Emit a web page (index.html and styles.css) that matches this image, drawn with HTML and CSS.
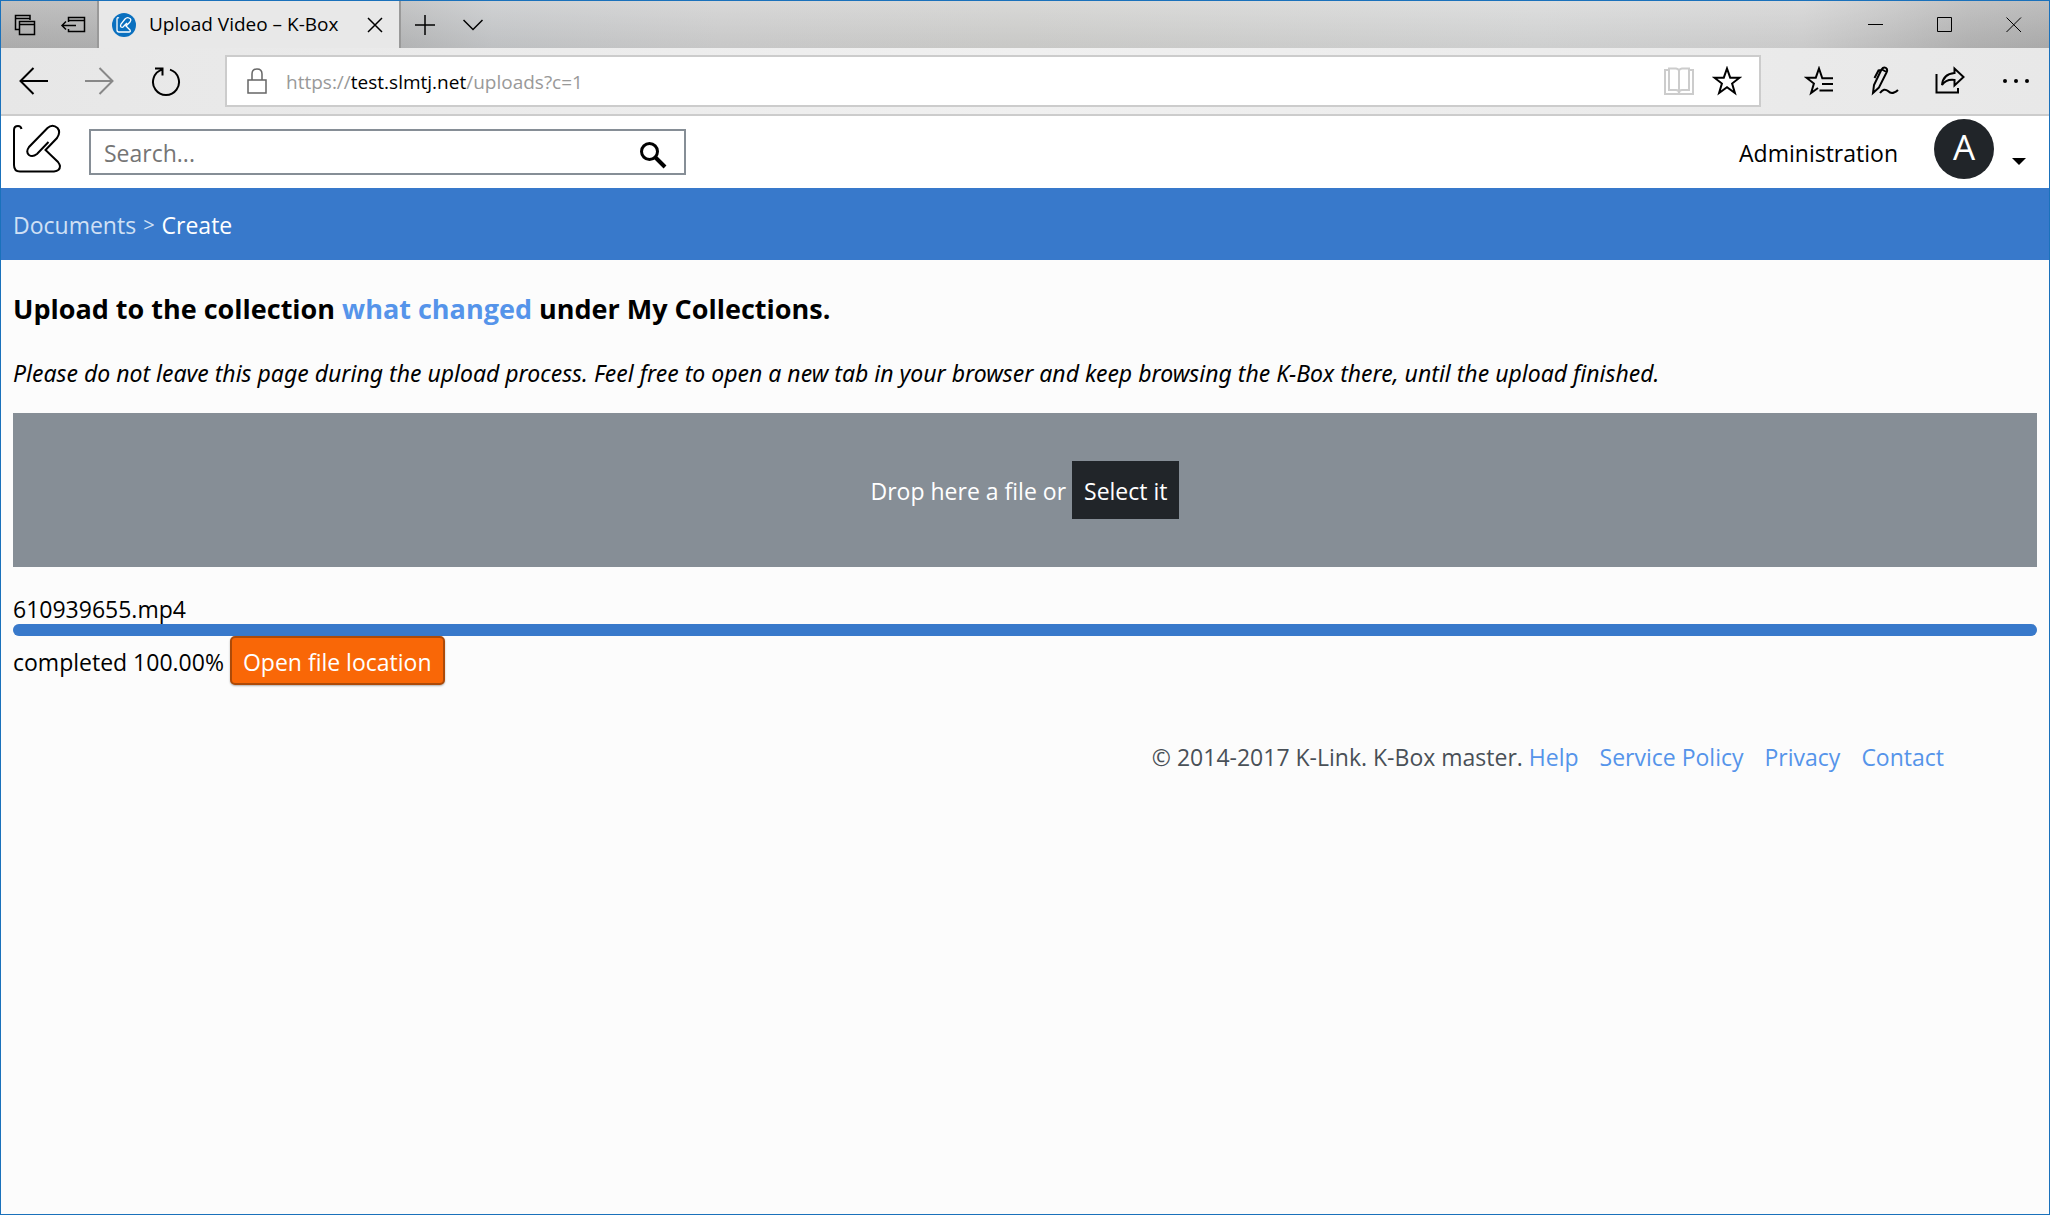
FILE: index.html
```html
<!DOCTYPE html>
<html lang="en">
<head>
<meta charset="utf-8">
<title>Upload Video – K-Box</title>
<link rel="stylesheet" href="styles.css">
</head>
<body>
<div class="window">
  <div class="tabbar">
    <div class="tab-tools">
      <button class="icon-btn" aria-label="Tabs you've set aside"><svg width="24" height="24" viewBox="0 0 24 24" class="thin"><path d="M6 16.500H2.500V2.500H17V7M2.500 5.500H17"/><path d="M6.500 8.500H21.500V21.500H6.500ZM6.500 11.500H21.500"/></svg></button>
      <button class="icon-btn" aria-label="Set these tabs aside"><svg width="26" height="24" viewBox="0 0 26 24" class="thin"><path d="M8.500 9V4.500H24.500V18.500H8.500V16M8.500 7.500H24.500M16 12.500H2M6 8.500L2 12.500L6 16.500"/></svg></button>
    </div>
    <div class="tab">
      <svg class="favicon" width="24" height="24" viewBox="0 0 24 24"><circle cx="12" cy="12" r="12" fill="#0a70bf"/><path d="M7 5Q5 4 5 6V17Q5 19 7 19H17Q19 19 18 17L14 13L18 9Q20 6 17 5Q15 4 13 6L9 11Q8 13 9 14Q11 15 12 13L15 10" fill="none" stroke="#fff" stroke-width="1.300"/></svg>
      <span class="tab-title">Upload Video – K-Box</span>
      <button class="icon-btn" aria-label="Close tab"><svg width="16" height="16" viewBox="0 0 16 16" class="thin"><path d="M1 1L15 15M15 1L1 15"/></svg></button>
    </div>
    <div class="tab-actions">
      <button class="icon-btn" aria-label="New tab"><svg width="20" height="20" viewBox="0 0 20 20" class="thin"><path d="M10 0V20M0 10H20"/></svg></button>
      <button class="icon-btn" aria-label="Tab previews"><svg width="20" height="20" viewBox="0 0 20 20" class="thin"><path d="M0.500 5L10 14.500L19.500 5"/></svg></button>
    </div>
    <div class="window-controls">
      <button class="icon-btn" aria-label="Minimize"><svg width="16" height="16" viewBox="0 0 16 16" class="hair"><path d="M0 7.500H15"/></svg></button>
      <button class="icon-btn" aria-label="Maximize"><svg width="16" height="16" viewBox="0 0 16 16" class="hair"><path d="M0.500 0.500H14.500V14.500H0.500Z"/></svg></button>
      <button class="icon-btn" aria-label="Close"><svg width="16" height="16" viewBox="0 0 16 16" class="hair"><path d="M0.500 0.500L15 15M15 0.500L0.500 15"/></svg></button>
    </div>
  </div>

  <div class="toolbar">
    <div class="nav">
      <button class="icon-btn" aria-label="Back"><svg width="30" height="30" viewBox="0 0 30 30" class="medium"><path d="M29 15H1M14.500 2L1.500 15L14.500 28"/></svg></button>
      <button class="icon-btn disabled" aria-label="Forward" disabled><svg width="30" height="30" viewBox="0 0 30 30" class="medium"><path d="M0 15H28M14.500 2L27.500 15L14.500 28"/></svg></button>
      <button class="icon-btn" aria-label="Refresh"><svg width="30" height="30" viewBox="0 0 30 30" class="medium"><path d="M19 3.600A13 13 0 1 1 11 3.600M4 2.500H11.500V9.500"/></svg></button>
    </div>
    <div class="address">
      <svg width="20" height="26" viewBox="0 0 20 26" class="thin lock"><path d="M1 12H19V25H1ZM5 12V6Q5 1 10 1Q15 1 15 6V12"/></svg>
      <span class="url">https://<span class="host">test.slmtj.net</span>/uploads?c=1</span>
      <button class="icon-btn reader" aria-label="Reading view" disabled><svg width="30" height="28" viewBox="0 0 30 28" class="book"><path d="M5 3H1V27H29V3H25M5 1.500H12Q15 2 15 4Q15 2 18 1.500H25V23H18Q15 23 15 26Q15 23 12 23H5ZM15 4V25"/></svg></button>
      <button class="icon-btn" aria-label="Add to favorites"><svg width="30" height="30" viewBox="0 0 30 30" class="medium"><path d="M15 2.500L18.200 11.700H27.500L20.100 17.500L22.900 27L15 21.300L7.100 27L9.900 17.500L2.500 11.700H11.800Z"/></svg></button>
    </div>
    <div class="browser-tools">
      <button class="icon-btn" aria-label="Favorites"><svg width="30" height="30" viewBox="0 0 30 30" class="medium"><path d="M29 12.200H18.300L15 2.500L11.800 11.700H2.500L9.900 17.500L7.100 27L14 22M18 18H29M15.500 24.500H29"/></svg></button>
      <button class="icon-btn" aria-label="Add notes"><svg width="28" height="30" viewBox="0 0 28 30" class="medium"><path d="M2 27L3 19L10.500 3.500Q12.500 0.500 15 2Q17 3.500 15.500 6.500L8 21.500ZM10 4L7.500 4.500L3.500 12M11 3.500L15.500 6M2 27L8 21.500M9 27Q13 21.500 17 25Q20 28 23 26.500Q25 26 27 24"/></svg></button>
      <button class="icon-btn" aria-label="Share"><svg width="30" height="30" viewBox="0 0 30 30" class="medium"><path d="M1.500 8V26.500H23V22M7 19Q8 8 19.500 7V2.500L28.500 11L19.500 19.500V14Q11 13 7 19Z"/></svg></button>
      <button class="icon-btn" aria-label="More"><svg width="28" height="6" viewBox="0 0 28 6"><circle cx="3" cy="3" r="2"/><circle cx="14" cy="3" r="2"/><circle cx="25" cy="3" r="2"/></svg></button>
    </div>
  </div>

  <header class="header">
    <a href="#" class="logo" aria-label="K-Box"><svg width="50" height="50" viewBox="0 0 50 50"><path d="M9.500 5Q9 2 6 2Q2 2 2 6V41Q2 47.500 8 47.500H42Q48 47 48 42Q47.500 40 46 38L33.500 26L45 14Q49 8 45.500 4Q40.500 -0.500 35.500 4L17 23Q13.500 28 17 31Q20.500 33.500 25 30L36.500 18"/></svg></a>
    <form class="search">
      <input type="search" aria-label="Search" placeholder="Search...">
      <button type="button" class="icon-btn" aria-label="Run search"><svg width="28" height="28" viewBox="0 0 28 28"><circle cx="10.500" cy="10.500" r="8" fill="none" stroke="#000" stroke-width="3"/><path d="M16 16L26 26" stroke="#000" stroke-width="4"/></svg></button>
    </form>
    <a href="#" class="admin">Administration</a>
    <button class="account" aria-label="Account menu"><span class="avatar">A</span><svg width="14" height="7" viewBox="0 0 14 7"><path d="M0 0H14L7 7Z"/></svg></button>
  </header>

  <nav class="breadcrumb" aria-label="Breadcrumb"><a href="#">Documents</a><span class="sep">&gt;</span><span class="current">Create</span></nav>

  <main class="content">
    <h1>Upload to the collection <a href="#">what changed</a> under My Collections.</h1>
    <p class="hint">Please do not leave this page during the upload process. Feel free to open a new tab in your browser and keep browsing the K-Box there, until the upload finished.</p>
    <div class="dropzone"><span>Drop here a file or</span><button class="select">Select it</button></div>
    <section class="upload">
      <div class="filename" id="upload-name">610939655.mp4</div>
      <div class="progress" role="progressbar" aria-labelledby="upload-name" aria-valuenow="100"><div class="bar" style="width: 100%"></div></div>
      <div class="status"><span>completed 100.00%</span><a href="#" class="open">Open file location</a></div>
    </section>
  </main>

  <footer class="footer"><span>© 2014-2017 K-Link. K-Box master. <a href="#">Help</a></span><a href="#">Service Policy</a><a href="#">Privacy</a><a href="#">Contact</a></footer>
</div>
</body>
</html>
```
FILE: styles.css
```css
* { box-sizing: border-box; }
body {
  margin: 0;
  font: 23px/32px "Open Sans", "Noto Sans", sans-serif;
  color: #000;
}
a { color: #5594ea; text-decoration: none; }
button { font: inherit; color: inherit; cursor: pointer; }
svg { display: block; flex: none; }

.window {
  min-height: 100vh;
  border: 1px solid #1a71bb;
  background: #fcfcfc;
}
.icon-btn {
  display: flex;
  align-items: center;
  justify-content: center;
  padding: 0;
  border: 0;
  background: none;
}
.thin, .hair, .medium, .book { fill: none; stroke: currentColor; }
.thin { stroke-width: 1.5; }
.hair { stroke-width: 1; }
.medium, .book { stroke-width: 2; }

/* Browser tab strip */
.tabbar {
  display: flex;
  height: 47px;
  background:
    linear-gradient(180deg, rgba(255, 255, 255, .18), rgba(0, 0, 0, .04)),
    linear-gradient(90deg, #b2b2b2 0%, #b7b8b9 19%, #c6c8ca 24%, #cfcfcf 35%, #d0d0ce 50%, #d6d7d7 75%, #d2d2d2 88%, #b6b6b6 96%, #b0b0b0 100%);
}
.tab-tools {
  display: flex;
  align-items: center;
  gap: 23px;
  width: 98px;
  padding-left: 12px;
  border-right: 2px solid #999;
}
.tab {
  display: flex;
  align-items: center;
  width: 302px;
  padding: 0 16px 0 13px;
  border-right: 2px solid #999;
  background: #e8e8e8;
  font-size: 19px;
}
.tab-title { flex: 1; padding: 0 0 2px 13px; white-space: nowrap; }
.tab-actions { display: flex; align-items: center; gap: 28px; padding-left: 14px; }
.window-controls { display: flex; align-items: center; gap: 53px; margin-left: auto; padding-right: 27px; }

/* Address row */
.toolbar {
  display: flex;
  align-items: center;
  height: 68px;
  border-bottom: 2px solid #ccc;
  background: linear-gradient(90deg, #e7e7e7, #f0f0f0 50%, #e8e8e8);
}
.nav { display: flex; gap: 36px; width: 224px; padding-left: 18px; }
.disabled { color: #888; }
.address {
  display: flex;
  align-items: center;
  flex: 1;
  height: 52px;
  padding: 0 17px 0 20px;
  border: 2px solid #ccc;
  background: #fff;
  font-size: 19px;
}
.lock { color: #666; }
.url { flex: 1; padding: 2px 0 0 19px; color: #999; }
.host { color: #000; }
.reader { margin-right: 18px; color: #ccc; }
.browser-tools { display: flex; gap: 36px; padding: 0 19px 0 43px; }
.browser-tools .icon-btn { min-width: 29px; }

/* Application header */
.header {
  display: flex;
  align-items: center;
  height: 72px;
  padding: 0 23px 0 11px;
  background: #fff;
}
.logo svg { fill: none; stroke: #000; stroke-width: 2; }
.logo { padding-bottom: 6px; }
.search {
  display: flex;
  align-items: center;
  width: 597px;
  height: 46px;
  margin-left: 27px;
  padding-right: 17px;
  border: 2px solid #868e96;
}
.search input {
  flex: 1;
  min-width: 0;
  height: 42px;
  padding: 2px 13px 0;
  border: 0;
  outline: 0;
  background: none;
  font: inherit;
}
.search .icon-btn { padding-top: 5px; }
.search input::placeholder { color: #757575; }
.admin { margin-left: auto; padding-top: 2px; color: #000; }
.account {
  display: flex;
  align-items: center;
  gap: 18px;
  margin-left: 36px;
  padding: 0 0 6px;
  border: 0;
  background: none;
}
.account svg { margin-top: 24px; }
.avatar {
  width: 60px;
  height: 60px;
  border-radius: 50%;
  background: #212529;
  color: #fff;
  font-size: 35px;
  line-height: 56px;
  text-align: center;
}

.breadcrumb {
  display: flex;
  align-items: center;
  gap: 7px;
  height: 72px;
  padding: 2px 12px 0;
  background: #3879cb;
  color: #fff;
}
.breadcrumb a, .sep { color: #d0e0f5; }
.sep { font-size: 20px; }

/* Upload page */
.content { padding: 0 12px; }
h1 { margin: 0; padding-top: 31px; font-size: 27px; line-height: 36px; }
.hint { margin: 30px 0 24px; font-family: "Noto Sans", sans-serif; font-style: italic; }
.dropzone {
  display: flex;
  align-items: center;
  justify-content: center;
  gap: 6px;
  height: 154px;
  background: #868e96;
  color: #fff;
}
.select {
  height: 58px;
  padding: 2px 12px 0;
  border: 0;
  background: #212529;
}
.dropzone span { padding-top: 2px; }
.upload { padding-top: 26px; }
.filename { line-height: 32px; }
.progress { height: 12px; margin-top: -1px; border-radius: 6px; background: #ddd; }
.bar { height: 100%; border-radius: 6px; background: #3879cb; }
.status { display: flex; align-items: center; gap: 6px; }
.status span { padding-top: 2px; }
.open {
  height: 49px;
  padding: 8px 11px 0;
  border: 2px solid #ad4a08;
  border-radius: 5px;
  background: #f96707;
  box-shadow: 0 1px 2px rgba(0, 0, 0, .3);
  color: #fff;
}

.footer {
  display: flex;
  justify-content: flex-end;
  gap: 21px;
  padding: 56px 105px 0 0;
  color: #495057;
}
```
